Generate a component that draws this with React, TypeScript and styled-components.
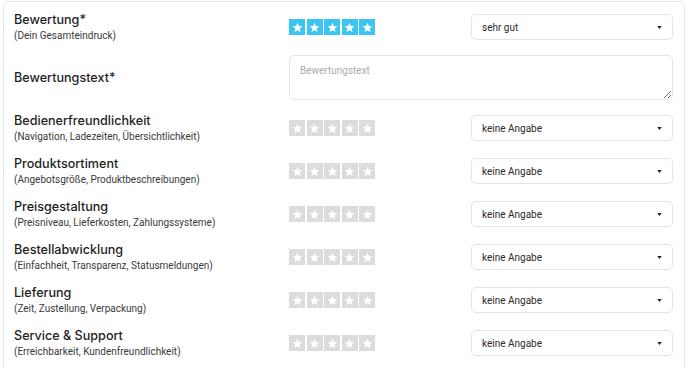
import React from 'react'
import styled, { createGlobalStyle } from 'styled-components'

const GlobalStyle = createGlobalStyle`
  html, body {
    margin: 0;
    padding: 0;
    background: #ffffff;
    font-family: Roboto, 'Liberation Sans', Arial, sans-serif;
  }
`

const Page = styled.div`
  width: 688px;
  height: 368px;
  overflow: hidden;
  padding: 1px 3px 0 3px;
  box-sizing: border-box;
`

const Card = styled.div`
  border: 1px solid #e6e6e6;
  border-radius: 6px;
  padding: 10px 11px 20px 10px;
  display: flex;
  flex-flow: column nowrap;
  gap: 13px;
`

const Row = styled.div<{ $tall?: boolean }>`
  display: grid;
  grid-template-columns: 275px 182px 202px;
  align-items: center;
  height: ${(p) => (p.$tall ? '45px' : '30px')};
`

const LabelWrap = styled.div`
  display: flex;
  flex-flow: column nowrap;
`

const Title = styled.div`
  font-family: Inter, Roboto, sans-serif;
  font-size: 12.6px;
  font-weight: 500;
  color: #1e1e1e;
  line-height: 15px;
`

const Sub = styled.div`
  font-size: 10px;
  color: #3a3a3a;
  line-height: 13px;
  margin-top: 2px;
`

const Stars = styled.div`
  display: flex;
  gap: 1.6px;
`

const StarBox = styled.div<{ $on: boolean }>`
  width: 16px;
  height: 16px;
  background: ${(p) => (p.$on ? '#3ac6f4' : '#dcdcdc')};
  display: flex;
  align-items: center;
  justify-content: center;
`

const SelectBox = styled.div`
  height: 26px;
  box-sizing: border-box;
  border: 1px solid #e4e4e4;
  border-radius: 5px;
  padding: 0 10px 0 10px;
  display: flex;
  align-items: center;
  justify-content: space-between;
  font-size: 10px;
  color: #2a2a2a;
  cursor: pointer;
`

const TextArea = styled.textarea`
  grid-column: 2 / span 2;
  height: 45px;
  box-sizing: border-box;
  border: 1px solid #e4e4e4;
  border-radius: 5px;
  padding: 9px 10px;
  font-family: Roboto, 'Liberation Sans', Arial, sans-serif;
  font-size: 10px;
  color: #2a2a2a;
  resize: vertical;
  outline: none;

  &::placeholder {
    color: #ababab;
  }
`

const Star = () => (
  <svg width="11" height="11" viewBox="0 0 24 24">
    <path
      fill="#ffffff"
      d="M12 1.8l3.1 6.9 7.5.7-5.7 5 1.7 7.4L12 17.9l-6.6 3.9 1.7-7.4-5.7-5 7.5-.7z"
    />
  </svg>
)

const Caret = () => (
  <svg width="5" height="3" viewBox="0 0 6 4">
    <path d="M0 0h6L3 4z" fill="#222222" />
  </svg>
)

const Rating = ({ value }: { value: number }) => (
  <Stars>
    {[1, 2, 3, 4, 5].map((n) => (
      <StarBox key={n} $on={n <= value}>
        <Star />
      </StarBox>
    ))}
  </Stars>
)

const Select = ({ value }: { value: string }) => (
  <SelectBox>
    <span>{value}</span>
    <Caret />
  </SelectBox>
)

const criteria = [
  { title: 'Bedienerfreundlichkeit', sub: '(Navigation, Ladezeiten, Übersichtlichkeit)' },
  { title: 'Produktsortiment', sub: '(Angebotsgröße, Produktbeschreibungen)' },
  { title: 'Preisgestaltung', sub: '(Preisniveau, Lieferkosten, Zahlungssysteme)' },
  { title: 'Bestellabwicklung', sub: '(Einfachheit, Transparenz, Statusmeldungen)' },
  { title: 'Lieferung', sub: '(Zeit, Zustellung, Verpackung)' },
  { title: 'Service & Support', sub: '(Erreichbarkeit, Kundenfreundlichkeit)' },
]

export default function App() {
  return (
    <>
      <GlobalStyle />
      <Page>
        <Card>
          <Row>
            <LabelWrap>
              <Title>Bewertung*</Title>
              <Sub>(Dein Gesamteindruck)</Sub>
            </LabelWrap>
            <Rating value={5} />
            <Select value="sehr gut" />
          </Row>
          <Row $tall>
            <LabelWrap>
              <Title>Bewertungstext*</Title>
            </LabelWrap>
            <TextArea placeholder="Bewertungstext" />
          </Row>
          {criteria.map((c) => (
            <Row key={c.title}>
              <LabelWrap>
                <Title>{c.title}</Title>
                <Sub>{c.sub}</Sub>
              </LabelWrap>
              <Rating value={0} />
              <Select value="keine Angabe" />
            </Row>
          ))}
        </Card>
      </Page>
    </>
  )
}
